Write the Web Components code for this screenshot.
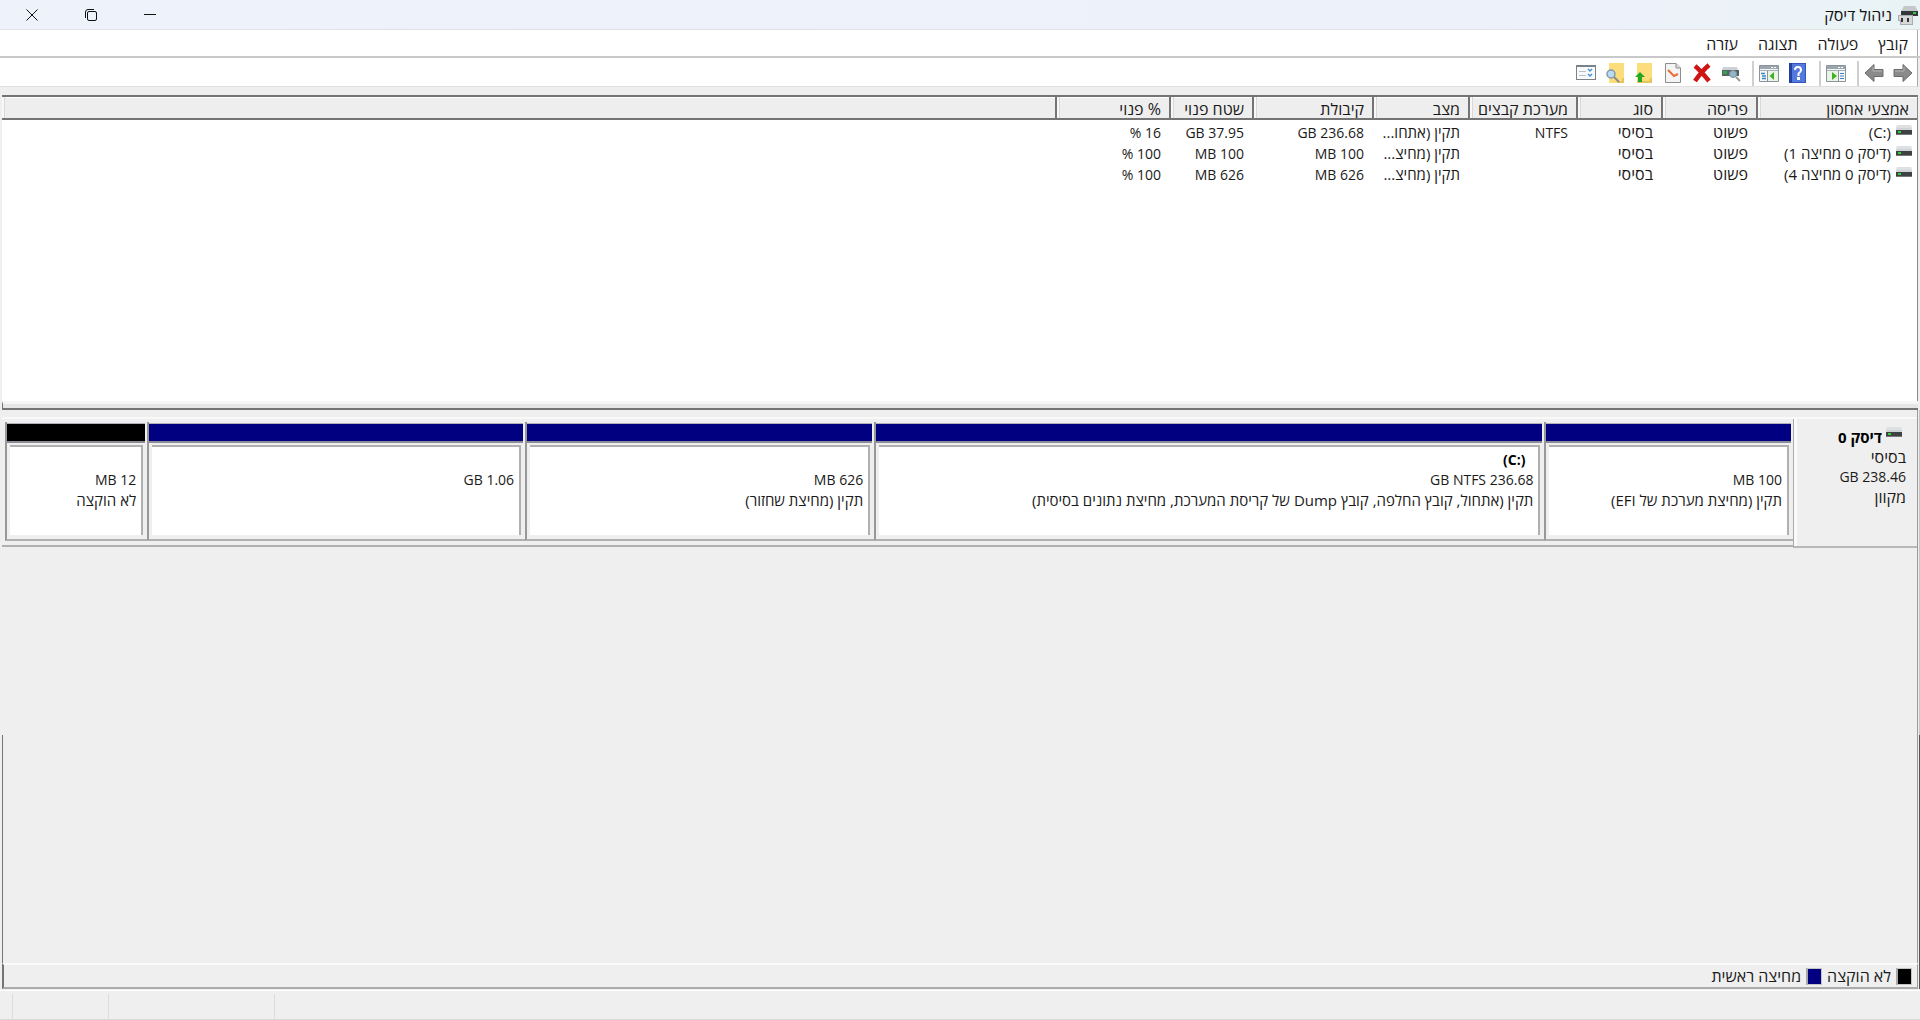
<!DOCTYPE html>
<html lang="he" dir="rtl">
<head>
<meta charset="utf-8">
<title>ניהול דיסק</title>
<style>
html, body { margin: 0; height: 100%; }
body { font: 16px/20px "Open Sans", "Noto Sans", sans-serif; color: #1a1a1a; background: #efefef; }
</style>
</head>
<body>
<disk-management></disk-management>
<script>
const define = (name, html) => customElements.define(name, class extends HTMLElement {
  constructor() {
    super();
    const t = document.createElement('template');
    t.innerHTML = html;
    this.attachShadow({ mode: 'open' }).append(t.content.cloneNode(true));
  }
});

/* small drive glyph */
define('drive-icon', `
<style>:host{display:inline-block;width:16px;height:12px;flex:none} svg{display:block}</style>
<svg width="16" height="12" viewBox="0 0 16 12">
  <path d="M1 0H15L16 5H0Z" fill="#cfd4d8"/><path d="M1 0H15L16 3H0Z" fill="#dde1e4"/>
  <rect y="5" width="16" height="5" fill="#3f4144"/><rect y="9" width="16" height="1" fill="#777"/>
  <rect x="2" y="6" width="3" height="2" fill="#2fd13a"/>
</svg>`);

define('title-bar', `
<style>
:host{display:flex;align-items:center;height:29px;background:linear-gradient(to left,#e9f3f5 0,#edf2fa 320px,#eef3fb 100%)}
svg{display:block}
.icon{margin:0 2px 0 6px}
h1{font:inherit;font-size:16px;margin:0;color:#111;flex:1}
.controls{display:flex;margin-left:2px}
button{width:59px;height:28px;padding:0;border:0;background:none;display:grid;place-items:center}
</style>
<svg class="icon" width="20" height="20" viewBox="0 0 20 20">
  <path d="M6 1H17L20 6H3Z" fill="#c5c8ca"/><rect x="3" y="6" width="17" height="5" fill="#35383a"/><rect x="15" y="7" width="3" height="2" fill="#35c63e"/>
  <path d="M0 10H15V20H2V16H0Z" fill="#a9adb0"/><path d="M1 11H14V19H3V15H1Z" fill="#d5d7d9"/><rect x="3" y="13" width="2" height="4" fill="#333"/><rect x="9" y="13" width="2" height="4" fill="#333"/>
</svg>
<h1>ניהול דיסק</h1>
<div class="controls">
<button aria-label="מזער"><svg width="12" height="12"><path d="M0 5.5H12" stroke="#111"/></svg></button>
<button aria-label="שחזר"><svg width="12" height="12" fill="none" stroke="#111"><rect x="2.5" y="2.5" width="9" height="9" rx="1.5"/><path d="M.5 9V3Q.5.5 3 .5H9"/></svg></button>
<button aria-label="סגור"><svg width="12" height="12"><path d="M.5.5L11.5 11.5M11.5.5L.5 11.5" stroke="#111"/></svg></button>
</div>`);

define('menu-bar', `
<style>
:host{display:block;background:#fff;border-top:1px solid #e2e2e2;border-bottom:2px solid #c9c9cb}
nav{display:flex;gap:20px;height:26px;box-sizing:border-box;padding:2px 9px 0 0;margin-right:2px;border-right:1px solid #aaa;align-items:center}
button{font:inherit;color:#1a1a1a;border:0;padding:0;background:none}
</style>
<nav><button>קובץ</button><button>פעולה</button><button>תצוגה</button><button>עזרה</button></nav>`);

const win = (w, inner) => `<svg width="${w}" height="20" viewBox="0 0 ${w} 20"><path d="M.5 2.5H${w - .5}V18.5H.5Z" fill="#f5f7f8" stroke="#8a949c"/><rect x="1" y="3" width="${w - 2}" height="3" fill="#9aa5ad"/><rect x="1" y="7" width="${w - 2}" height="1" fill="#a7b0b7"/><path d="M${w - 8} 4.5h2m1 0h2" stroke="#fff"/>${inner}</svg>`;
define('tool-bar', `
<style>
:host{display:flex;align-items:center;height:26px;padding-top:2px;margin-right:2px;background:#fff;border-right:1px solid #aaa;border-bottom:1px solid #e0e0e0}
button{width:29px;height:26px;padding:0;border:0;background:none;display:grid;place-items:center}
svg{display:block}
i{width:7px;height:25px;border-right:2px solid #cfcfcf}
</style>
<button aria-label="קדימה"><svg width="20" height="20"><path d="M1 6.500H10V1.500L19 10L10 18.500V13.500H1Z" fill="#8b8b8b" stroke="#6c6c6c"/><path d="M2 8H11V4" fill="none" stroke="#b5b5b5"/></svg></button>
<button aria-label="אחורה"><svg width="20" height="20"><path d="M19 6.500H10V1.500L1 10L10 18.500V13.500H19Z" fill="#8b8b8b" stroke="#6c6c6c"/><path d="M18 8H9V4" fill="none" stroke="#b5b5b5"/></svg></button>
<i></i>
<button aria-label="הצג חלונית פעולה">${win(20, '<path d="M12.5 8V18" stroke="#8a949c"/><rect x="1" y="8" width="11" height="10" fill="#e9f4e4"/><path d="M6 9L11 13L6 17Z" fill="#42b023"/><path d="M14 10.5h4M14 13h4M14 15.5h4" stroke="#3e84c4"/>')}</button>
<i></i>
<button aria-label="עזרה"><svg width="17" height="20"><rect width="17" height="20" fill="#3553bd"/><rect x="3" y="1" width="13" height="18" fill="#5479dc"/><path d="M0 0H3V20H0Z" fill="#2440a0"/><path d="M6 7Q6 4 9 4T12 7Q12 9 9.500 10.500V13" fill="none" stroke="#fff" stroke-width="2"/><rect x="8" y="14" width="3" height="3" fill="#fff"/></svg></button>
<button aria-label="הצג עץ מסוף">${win(20, '<path d="M8.5 8V18" stroke="#8a949c"/><rect x="9" y="8" width="10" height="10" fill="#e9f4e4"/><path d="M15 9L10.5 13L15 17Z" fill="#42b023"/><path d="M2 10.5h4M3 13h4M3 15.5h4" stroke="#3e84c4" stroke-width="1.5"/>')}</button>
<i></i>
<button aria-label="סריקה"><svg width="20" height="20"><path d="M2 4H16L17 7H1Z" fill="#cdd2d5"/><rect x="1" y="7" width="17" height="6" fill="#596165"/><rect x="2" y="8" width="4" height="3" fill="#2fa848"/><circle cx="12" cy="11" r="3.5" fill="#8fb9cb" stroke="#82939c"/><path d="M15 14L19 18" stroke="#9a9a9a" stroke-width="2"/></svg></button>
<button aria-label="מחק"><svg width="20" height="20"><path d="M3 3Q8 7 17 18M17 2Q10 8 3 18" fill="none" stroke="#d01414" stroke-width="4.500"/></svg></button>
<button aria-label="מאפיינים"><svg width="16" height="20"><path d="M.5.5H11L15.500 5V19.500H.5Z" fill="#f4f4f4" stroke="#8d8d8d"/><path d="M11 .5V5H15.500" fill="#ddd" stroke="#8d8d8d"/><path d="M3 7L9 13L13 11" fill="none" stroke="#ec6a35" stroke-width="2"/></svg></button>
<button aria-label="תיקיה למעלה"><svg width="18" height="20"><path d="M2 0H17V20H2Z" fill="#fbdd7c"/><path d="M15 15H17V20H2V18H14Z" fill="#e7c45f"/><path d="M5 9L10 14H7V19H3V14H0Z" fill="#23a823"/></svg></button>
<button aria-label="חיפוש בתיקיה"><svg width="20" height="20"><path d="M4 0H19V20H4Z" fill="#fbdd7c"/><path d="M17 15H19V20H12V18H17Z" fill="#e7c45f"/><circle cx="6" cy="11" r="4" fill="#b9dcf2" stroke="#8599a6" stroke-width="1.500"/><path d="M9 14L14 19" stroke="#8c8c8c" stroke-width="2"/></svg></button>
<button aria-label="רשימה"><svg width="20" height="20"><rect x=".5" y="2.500" width="19" height="14" fill="#fafafa" stroke="#79838b"/><rect y="2" width="20" height="2" fill="#79838b"/><path d="M3 8.500H10M3 12.500H10" stroke="#b9bfc5"/><path d="M12 6L14 8L16 6M12 11L14 13L16 11" fill="none" stroke="#3e95dd" stroke-width="1.500"/></svg></button>`);

const row = (name, fs, st, cap, free, pct) => `<tr><td class="mix"><span class="n"><drive-icon></drive-icon><span>${name}</span></span></td><td>פשוט</td><td>בסיסי</td><td class="num">${fs}</td><td class="mix">${st}</td><td class="num">${cap}</td><td class="num">${free}</td><td class="num">${pct}</td><td></td></tr>`;
define('volume-list', `
<style>
:host{display:block;height:304px;margin:8px 2px 0;border-top:2px solid #747474;border-right:1px solid #8a8a8a;background:#fff}
table{width:100%;table-layout:fixed;border-collapse:separate;border-spacing:0}
th,td{padding:0 8px 0 0;text-align:right;font-weight:400;white-space:nowrap;overflow:hidden}
th{height:23px;line-height:18px;padding-top:2px;box-sizing:border-box;background:#eee;border-left:2px solid #747474;border-bottom:2px solid #747474;box-shadow:inset 2px 0 #f8f8f8,inset 3px 0 #d8d8d8,inset 0 1px #fff}
th:last-child{border-left:0}
td{height:21px;line-height:21px}
tbody tr:first-child td{padding-top:2px}
td:first-child{padding-right:5px}
.mix{font-size:15px}
.num{font-size:14px}
.n{display:flex;gap:5px;align-items:center}
.n drive-icon{margin-bottom:4px}
</style>
<table>
<colgroup><col style="width:161px"><col style="width:95px"><col style="width:85px"><col style="width:108px"><col style="width:96px"><col style="width:120px"><col style="width:83px"><col style="width:114px"><col></colgroup>
<thead><tr><th>אמצעי אחסון</th><th>פריסה</th><th>סוג</th><th>מערכת קבצים</th><th>מצב</th><th>קיבולת</th><th>שטח פנוי</th><th>% פנוי</th><th></th></tr></thead>
<tbody>
${row('<bdi dir="ltr">(C:)</bdi>', 'NTFS', 'תקין (אתחו...', '236.68 GB', '37.95 GB', '16 %')}
${row('(דיסק 0 מחיצה 1)', '', 'תקין (מחיצ...', '100 MB', '100 MB', '100 %')}
${row('(דיסק 0 מחיצה 4)', '', 'תקין (מחיצ...', '626 MB', '626 MB', '100 %')}
</tbody></table>`);

define('pane-splitter', `
<style>:host{display:block;height:4px;margin:0 2px;background:#e6e6e6;border-top:3px solid #f6f6f6;border-bottom:2px solid #747474;border-left:1px solid #747474}</style>`);

define('disk-label', `
<style>
:host{display:block;box-sizing:border-box;width:124px;flex:none;padding:8px 11px 0 0;border-left:1px solid #aaa;border-bottom:2px solid #b8b8b8;box-shadow:inset 3px 0 #fafafa}
.h{display:flex;gap:4px;padding-right:4px;font-size:15px;font-weight:700;color:#000}
</style>
<div class="h"><drive-icon></drive-icon><slot name="name"></slot></div><slot></slot>`);

define('disk-partition', `
<style>
:host{display:flex;flex-direction:column;min-width:0;box-sizing:border-box;font-size:15px;border-left:2px solid #989898;border-bottom:2px solid #b0b0b0;padding-top:1px}
.bar{height:17px;margin-right:2px;background:var(--bar,#000080);border-bottom:2px solid #8c8c96;border-top:1px solid #b0b0b8}
.box{flex:1;margin:2px 4px 4px 3px;padding:3px 5px 0 0;background:#fff;border-top:2px solid #b0b0b0;border-right:2px solid #b0b0b0;white-space:nowrap;overflow:hidden}
.name{height:20px;padding-right:8px;font-size:14px;font-weight:700;color:#000}
</style>
<div class="bar"></div>
<div class="box"><div class="name"><slot name="name"></slot></div><slot></slot></div>`);

define('disk-view', `
<style>
:host{display:flex;flex-direction:column;flex:1;margin:0 2px;padding-top:7px;border-right:1px solid #9a9a9a}
.row{display:flex;height:131px;border-top:2px solid #f9f9f9;box-sizing:border-box}
.parts{flex:1;display:flex;min-width:0;padding:3px 0 4px 3px;margin-bottom:1px;border-bottom:2px solid #b0b0b0;box-sizing:border-box}
.num{font-size:14px}
</style>
<div class="row">
<disk-label><span slot="name">דיסק 0</span><div>בסיסי</div><div class="num">238.46 GB</div><div>מקוון</div></disk-label>
<div class="parts">
<disk-partition style="flex:248 0 0"><div class="num">100 MB</div><div>תקין (מחיצת מערכת של EFI)</div></disk-partition>
<disk-partition style="flex:672 0 0"><bdi slot="name" dir="ltr">(C:)</bdi><div class="num">236.68 GB NTFS</div><div>תקין (אתחול, קובץ החלפה, קובץ Dump של קריסת המערכת, מחיצת נתונים בסיסית)</div></disk-partition>
<disk-partition style="flex:349 0 0"><div class="num">626 MB</div><div>תקין (מחיצת שחזור)</div></disk-partition>
<disk-partition style="flex:378 0 0"><div class="num">1.06 GB</div></disk-partition>
<disk-partition style="flex:141 0 0;--bar:#000"><div class="num">12 MB</div><div>לא הוקצה</div></disk-partition>
</div></div>`);

define('legend-bar', `
<style>
:host{display:flex;align-items:center;height:22px;margin:0 2px;padding-right:5px;border-top:2px solid #fbfbfb;border-bottom:2px solid #ababab;border-right:1px solid #9a9a9a;border-left:2px solid #747474}
span{display:flex;align-items:center;gap:5px;margin-left:5px}
i{width:13px;height:15px;background:var(--c);border:1px solid #c4c4c4;border-left:2px solid #a8a8a8}
</style>
<span><i style="--c:#000"></i>לא הוקצה</span><span><i style="--c:#000080"></i>מחיצה ראשית</span>`);

define('status-bar', `
<style>
:host{display:flex;height:28px;margin-top:1px;border-top:1px solid #fff;border-bottom:1px solid #d8d8d8}
i{border-left:1px solid #dcdcdc;margin-top:3px}
</style>
<i style="flex:1"></i><i style="width:165px"></i><i style="width:95px"></i><i style="width:12px;border:0"></i>`);

define('disk-management', `
<style>
:host{display:flex;flex-direction:column;min-height:100vh}
.lower{flex:1;display:flex;flex-direction:column;background:linear-gradient(#747474,#747474) 2px 325px/1px 100% no-repeat,linear-gradient(#555,#555) right 325px/1px 100% no-repeat,linear-gradient(#c4c4c4,#c4c4c4) right/1px 100% no-repeat}
</style>
<title-bar></title-bar>
<menu-bar></menu-bar>
<tool-bar></tool-bar>
<volume-list></volume-list>
<pane-splitter></pane-splitter>
<div class="lower"><disk-view></disk-view><legend-bar></legend-bar></div>
<status-bar></status-bar>`);
</script>
</body>
</html>
